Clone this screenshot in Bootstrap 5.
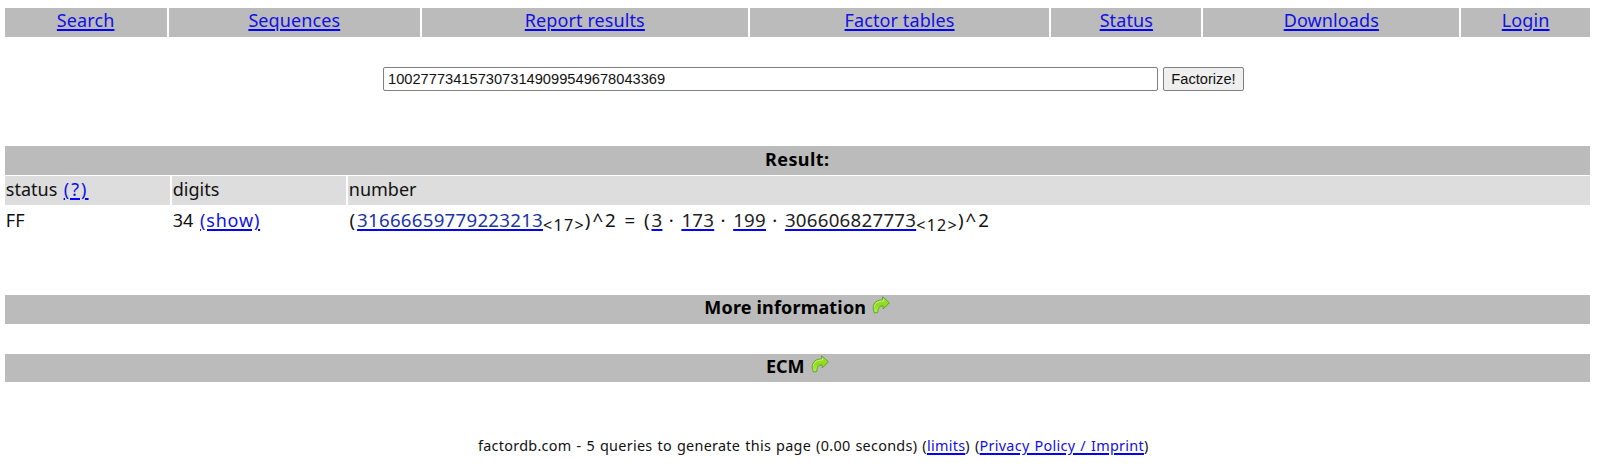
<!DOCTYPE html>
<html lang="en">
<head>
<meta charset="utf-8">
<title>factordb.com</title>
<link href="https://cdn.jsdelivr.net/npm/bootstrap@5.3.0/dist/css/bootstrap.min.css" rel="stylesheet">
<style>
body{background:#fff;color:#111;font:18px/29px "Noto Sans",sans-serif;padding:8px 10px 0 4.5px;overflow:hidden}
a,a:hover{color:#1010e8;text-decoration:underline;text-decoration-color:#00f;text-decoration-thickness:1.5px;text-underline-offset:2px}
.bar{background:#bbb;height:29px}
.menu{display:grid;grid-template-columns:162.3px 251px 326px 299.5px 150px 256px 1fr;column-gap:2px}
.menu .bar{line-height:25px;letter-spacing:.1px}
.ask{margin:30px 0 55px;padding-left:378.5px;gap:5px}
.ask input,.ask button{font:14.66px "Liberation Sans",sans-serif;height:24px;border:1px solid #808080;border-radius:2px;color:#111}
.ask input{width:775px;padding:1px 4px}
.ask button{width:81px;background:#efefef;padding:0}
.title{font-weight:700;line-height:27px;color:#000}
.title.result{letter-spacing:.4px}
.title.more{line-height:25px;letter-spacing:.17px;margin-top:60px}
.title.ecm{line-height:25px;height:28px;margin-top:30px}
.title svg{width:18px;height:18px;margin:1px 0 0 6px}
.cells{display:grid;grid-template-columns:165px 174px 1fr;column-gap:2px;margin-top:1px}
.cells>div{height:29px;padding-left:1.3px;line-height:29px;white-space:nowrap}
.heads>div{background:#ddd;line-height:27px}
.help-link{letter-spacing:2.1px;margin-left:1.7px}
.show-link{letter-spacing:.8px;margin-left:2px}
.cells .fac{font-size:18.7px;line-height:28px;letter-spacing:.25px;padding-left:2px}
.fac .sym{letter-spacing:1.95px}
.fac .dot{letter-spacing:1.4px}
.fac sub{font-size:16px;bottom:-4px;line-height:0;letter-spacing:1.3px}
.fac a{color:#222}
.fac a.whole{color:#1a35a8}
.foot{font-size:14.4px;letter-spacing:.29px;word-spacing:.95px;margin-top:49px;padding-left:32px}
</style>
</head>
<body>
<svg width="0" height="0" class="position-absolute" aria-hidden="true">
<defs>
<linearGradient id="leaf" x1="0" y1="0" x2="0" y2="1"><stop offset="0" stop-color="#a4dc3c"/><stop offset=".5" stop-color="#8ddd18"/><stop offset="1" stop-color="#b8ee62"/></linearGradient>
<symbol id="more" viewBox="0 0 18 18"><path d="M10.6 .8 17.4 6.8 11.2 13V9.9C7.6 9.8 5.8 11.9 6 16.2L2.6 17.2C-.8 10.6 1.8 4 10.6 3.9Z" fill="url(#leaf)" stroke="#62a52b" stroke-width="1" stroke-linejoin="round"/><path d="M11.5 2.9V5C6 4.9 2.7 7.2 2.2 11" fill="none" stroke="#d2f595" stroke-width=".8"/></symbol>
</defs>
</svg>
<nav class="menu text-center">
<div class="bar"><a href="#">Search</a></div>
<div class="bar"><a href="#">Sequences</a></div>
<div class="bar"><a href="#">Report results</a></div>
<div class="bar"><a href="#">Factor tables</a></div>
<div class="bar"><a href="#">Status</a></div>
<div class="bar"><a href="#">Downloads</a></div>
<div class="bar"><a href="#">Login</a></div>
</nav>
<form class="ask d-flex"><input type="text" aria-label="Number" value="1002777341573073149099549678043369"><button type="button">Factorize!</button></form>
<div class="bar title result d-flex justify-content-center">Result:</div>
<div class="cells heads"><div>status <a class="help-link" href="#">(?)</a></div><div>digits</div><div>number</div></div>
<div class="cells"><div>FF</div><div>34 <a class="show-link" href="#">(show)</a></div><div class="fac"><span class="sym">(</span><a class="whole" href="#">31666659779223213</a><sub>&lt;17&gt;</sub><span class="sym">)^2 = (</span><a href="#">3</a><span class="dot"> · </span><a href="#">173</a><span class="dot"> · </span><a href="#">199</a><span class="dot"> · </span><a href="#">306606827773</a><sub>&lt;12&gt;</sub><span class="sym">)^2</span></div></div>
<div class="bar title more d-flex justify-content-center">More information<svg><use href="#more"/></svg></div>
<div class="bar title ecm d-flex justify-content-center">ECM<svg><use href="#more"/></svg></div>
<footer class="foot text-center">factordb.com - 5 queries to generate this page (0.00 seconds) (<a href="#">limits</a>) (<a href="#">Privacy Policy / Imprint</a>)</footer>
</body>
</html>
